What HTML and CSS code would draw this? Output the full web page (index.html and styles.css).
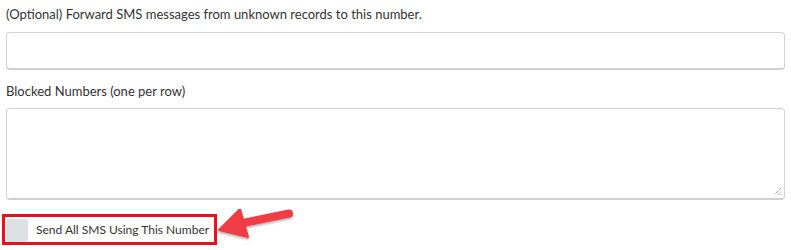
FILE: index.html
```html
<!DOCTYPE html>
<html>
<head>
<meta charset="utf-8">
<link rel="stylesheet" href="styles.css">
</head>
<body>
<div class="form">
  <label class="label first">(Optional) Forward SMS messages from unknown records to this number.</label>
  <div class="input"></div>
  <label class="label second">Blocked Numbers (one per row)</label>
  <div class="textarea">
    <svg class="grip" width="9" height="9" viewBox="0 0 9 9"><path d="M8 1L1 8M8 4.5L4.5 8M8 7.5L7.5 8" stroke="#777" stroke-width="1" stroke-dasharray="1 1"/></svg>
  </div>
  <div class="check-row">
    <div class="highlight">
      <span class="box"></span>
      <span class="check-label">Send All SMS Using This Number</span>
    </div>
    <svg class="arrow" width="80" height="40" viewBox="0 0 80 40">
      <defs>
        <filter id="sh" x="-20%" y="-30%" width="140%" height="170%">
          <feDropShadow dx="0" dy="1.5" stdDeviation="1.2" flood-color="#000" flood-opacity="0.35"/>
        </filter>
      </defs>
      <g filter="url(#sh)">
        <path d="M72 4.5 L26 14" stroke="#f03c45" stroke-width="8" stroke-linecap="round"/>
        <path d="M2 21 L23 0 L31 28 Z" fill="#f03c45" stroke="#f03c45" stroke-width="2" stroke-linejoin="round"/>
      </g>
    </svg>
  </div>
</div>
</body>
</html>
```
FILE: styles.css
```css
html, body {
  margin: 0;
  padding: 0;
  background: #fff;
}
.form {
  display: flex;
  flex-direction: column;
  padding: 5px 6px 0 6px;
  font-family: Lato, "Open Sans", sans-serif;
  color: #333;
}
.label {
  font-size: 13px;
  line-height: 18px;
  display: block;
}
.first { margin-bottom: 9px; }
.second { margin-top: 12px; margin-bottom: 8px; }
.input {
  height: 35px;
  border: 1px solid #d3d3d3;
  border-bottom: 2px solid #d0d0d0;
  border-radius: 4px;
}
.textarea {
  height: 89px;
  border: 1px solid #d3d3d3;
  border-bottom: 2px solid #d0d0d0;
  border-radius: 4px;
  position: relative;
}
.grip {
  position: absolute;
  right: 2px;
  bottom: 2px;
}
.check-row {
  display: flex;
  align-items: flex-start;
  margin-top: 14px;
  margin-left: -4px;
}
.highlight {
  display: flex;
  align-items: center;
  gap: 8px;
  border: 3px solid #e8101b;
  padding: 0 5px 0 1px;
  height: 25px;
}
.box {
  width: 22px;
  height: 23px;
  background: #dde1e6;
  border-radius: 3px;
  margin-top: 1px;
}
.check-label {
  font-size: 12px;
  color: #333;
}
.arrow {
  margin-left: 0;
  margin-top: -5px;
}
```
